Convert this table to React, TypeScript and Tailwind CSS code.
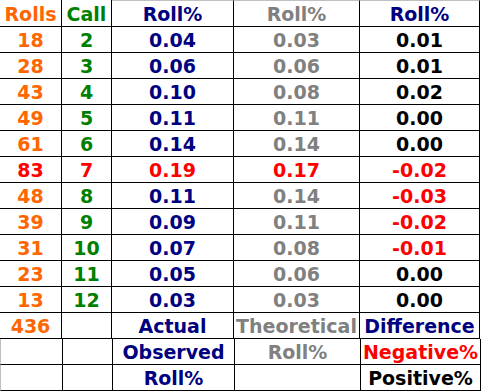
import React from "react";

type Cell = { text: string; color: string };

const ORANGE = "text-[#ff6600]";
const GREEN = "text-[#008000]";
const NAVY = "text-[#000080]";
const GRAY = "text-[#808080]";
const RED = "text-[#ff0000]";
const BLACK = "text-black";

const data: [number, number, string, string, string][] = [
    [18, 2, "0.04", "0.03", "0.01"],
    [28, 3, "0.06", "0.06", "0.01"],
    [43, 4, "0.10", "0.08", "0.02"],
    [49, 5, "0.11", "0.11", "0.00"],
    [61, 6, "0.14", "0.14", "0.00"],
    [83, 7, "0.19", "0.17", "-0.02"],
    [48, 8, "0.11", "0.14", "-0.03"],
    [39, 9, "0.09", "0.11", "-0.02"],
    [31, 10, "0.07", "0.08", "-0.01"],
    [23, 11, "0.05", "0.06", "0.00"],
    [13, 12, "0.03", "0.03", "0.00"],
];

const widths = ["w-[62px]", "w-[50px]", "w-[122px]", "w-[126px]", "w-[120px]"];

function Row({ cells, first, leftGray }: { cells: Cell[]; first?: boolean; leftGray?: boolean }) {
    return (
        <div className={`flex ${first ? "h-[27px]" : "h-[26px]"}`}>
            {cells.map((c, i) => (
                <div
                    key={i}
                    className={`${widths[i]} shrink-0 flex items-center justify-center pt-[2px] border-r border-b border-black whitespace-nowrap leading-none ${c.color} ${i === 0 && leftGray ? "border-l border-l-[#c0c0c0] w-[63px]" : ""} ${first && i >= 2 ? "border-t border-t-[#c0c0c0]" : ""}`}
                >
                    {c.text}
                </div>
            ))}
        </div>
    );
}

export default function App() {
    const header: Cell[] = [
        { text: "Rolls", color: ORANGE },
        { text: "Call", color: GREEN },
        { text: "Roll%", color: NAVY },
        { text: "Roll%", color: GRAY },
        { text: "Roll%", color: NAVY },
    ];

    const rows: Cell[][] = data.map(([r, c, a, t, d]) => {
        const hot = c === 7;
        const neg = d.startsWith("-");
        return [
            { text: String(r), color: hot ? RED : ORANGE },
            { text: String(c), color: hot ? RED : GREEN },
            { text: a, color: hot ? RED : NAVY },
            { text: t, color: hot ? RED : GRAY },
            { text: d, color: neg ? RED : BLACK },
        ];
    });

    const footer: Cell[][] = [
        [
            { text: "436", color: ORANGE },
            { text: "", color: BLACK },
            { text: "Actual", color: NAVY },
            { text: "Theoretical", color: GRAY },
            { text: "Difference", color: NAVY },
        ],
        [
            { text: "", color: BLACK },
            { text: "", color: BLACK },
            { text: "Observed", color: NAVY },
            { text: "Roll%", color: GRAY },
            { text: "Negative%", color: RED },
        ],
        [
            { text: "", color: BLACK },
            { text: "", color: BLACK },
            { text: "Roll%", color: NAVY },
            { text: "", color: BLACK },
            { text: "Positive%", color: BLACK },
        ],
    ];

    return (
        <div className="w-[483px] h-[391px] bg-white overflow-hidden font-bold text-[19px]" style={{ fontFamily: "'DejaVu Sans', Verdana, sans-serif" }}>
            <div className="flex flex-col">
                <Row cells={header} first />
                {rows.map((r, i) => (
                    <Row key={i} cells={r} />
                ))}
                {footer.map((r, i) => (
                    <Row key={i} cells={r} leftGray={i > 0} />
                ))}
            </div>
        </div>
    );
}
